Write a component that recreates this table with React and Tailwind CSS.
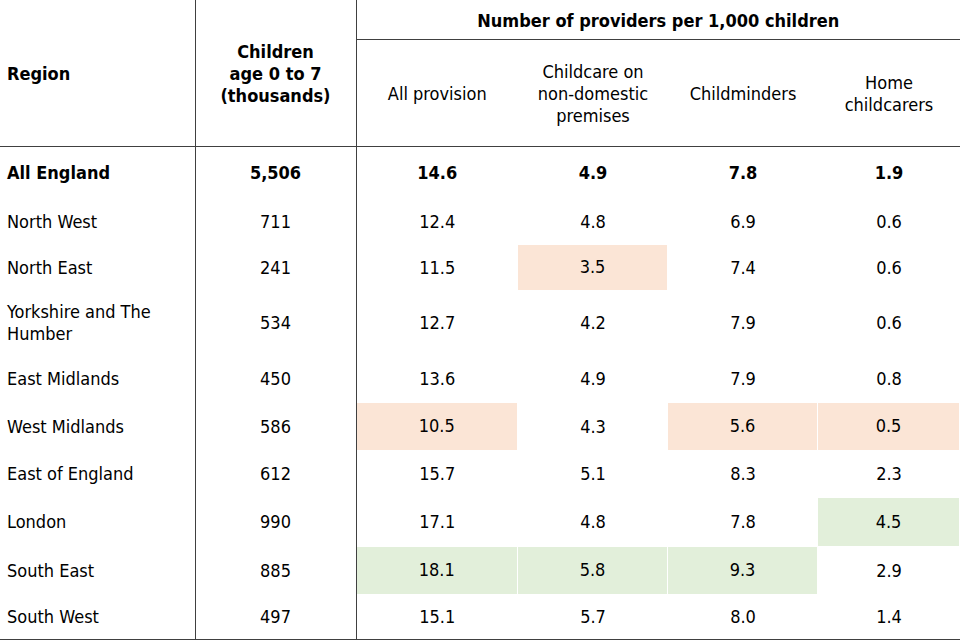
import React from "react";

const rows = [
  { region: "All England", children: "5,506", vals: ["14.6", "4.9", "7.8", "1.9"], bold: true, h: "h-[52px]" },
  { region: "North West", children: "711", vals: ["12.4", "4.8", "6.9", "0.6"], h: "h-[46px]" },
  { region: "North East", children: "241", vals: ["11.5", "3.5", "7.4", "0.6"], hl: { 1: "red" }, h: "h-[46px]" },
  { region: "Yorkshire and The Humber", children: "534", vals: ["12.7", "4.2", "7.9", "0.6"], h: "h-[65px]" },
  { region: "East Midlands", children: "450", vals: ["13.6", "4.9", "7.9", "0.8"], h: "h-[47px]" },
  { region: "West Midlands", children: "586", vals: ["10.5", "4.3", "5.6", "0.5"], hl: { 0: "red", 2: "red", 3: "red" }, h: "h-[48px]" },
  { region: "East of England", children: "612", vals: ["15.7", "5.1", "8.3", "2.3"], h: "h-[47px]" },
  { region: "London", children: "990", vals: ["17.1", "4.8", "7.8", "4.5"], hl: { 3: "green" }, h: "h-[49px]" },
  { region: "South East", children: "885", vals: ["18.1", "5.8", "9.3", "2.9"], hl: { 0: "green", 1: "green", 2: "green" }, h: "h-[48px]" },
  { region: "South West", children: "497", vals: ["15.1", "5.7", "8.0", "1.4"], h: "h-[44px]" },
];

const fills = {
  red: "bg-[#fbe5d6]",
  green: "bg-[#e2efda]",
};

const App = () => {
  return (
    <div
      className="w-[960px] h-[640px] bg-white text-black overflow-hidden"
      style={{ fontFamily: '"DejaVu Sans Condensed", "DejaVu Sans", sans-serif' }}
    >
      <table className="w-[960px] border-collapse table-fixed text-[18px] leading-[22px]">
        <colgroup>
          <col className="w-[195px]" />
          <col className="w-[161px]" />
          <col className="w-[162px]" />
          <col className="w-[150px]" />
          <col className="w-[150px]" />
          <col className="w-[142px]" />
        </colgroup>
        <thead>
          <tr className="h-[39px]">
            <th rowSpan={2} className="text-left font-bold px-[7px] pt-[3px] border-r border-b border-[#404040]">
              Region
            </th>
            <th rowSpan={2} className="text-center font-bold pt-[3px] border-r border-b border-[#404040]">
              Children<br />age 0 to 7<br />(thousands)
            </th>
            <th colSpan={4} className="text-center font-bold pt-[3px] border-b border-[#404040]">
              Number of providers per 1,000 children
            </th>
          </tr>
          <tr className="h-[107px]">
            <th className="font-normal text-center pt-[2px] border-b border-[#404040]">All provision</th>
            <th className="font-normal text-center pt-[2px] border-b border-[#404040]">
              Childcare on<br />non-domestic<br />premises
            </th>
            <th className="font-normal text-center pt-[2px] border-b border-[#404040]">Childminders</th>
            <th className="font-normal text-center pt-[2px] border-b border-[#404040]">
              Home<br />childcarers
            </th>
          </tr>
        </thead>
        <tbody>
          {rows.map((r, i) => (
            <tr
              key={r.region}
              className={`${r.h} ${r.bold ? "font-bold" : ""} ${i === rows.length - 1 ? "border-b border-[#404040]" : ""}`}
            >
              <td className="px-[7px] border-r border-[#404040] text-left">{r.region}</td>
              <td className="border-r border-[#404040] text-center">{r.children}</td>
              {r.vals.map((v, j) => {
                const c = r.hl && r.hl[j];
                return (
                  <td key={j} className="p-0 text-center">
                    <div
                      className={`flex items-center justify-center ${r.h} ${c ? fills[c] : ""} ${
                        c ? "border-r border-b border-white" : ""
                      }`}
                    >
                      {v}
                    </div>
                  </td>
                );
              })}
            </tr>
          ))}
        </tbody>
      </table>
    </div>
  );
};

export default App;
